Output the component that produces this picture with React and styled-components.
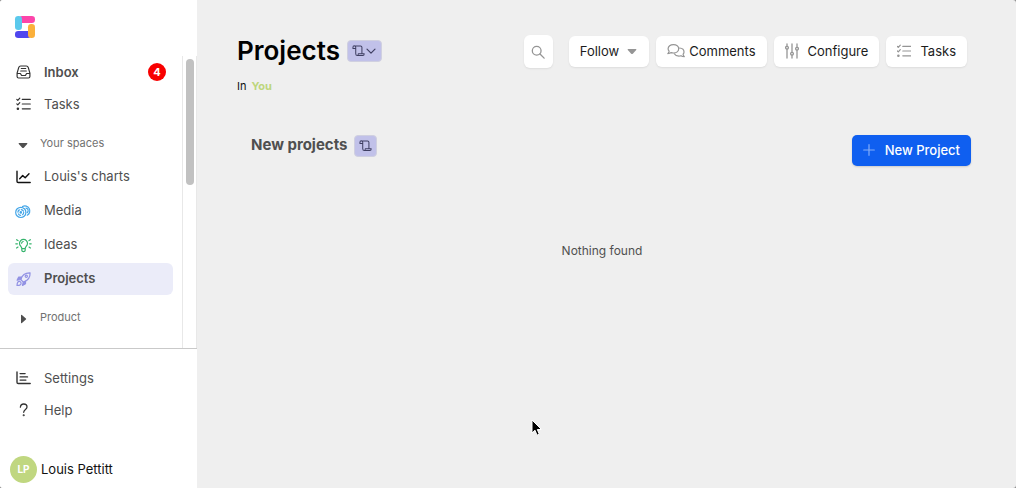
import React from 'react';
import styled, { createGlobalStyle } from 'styled-components';

const GlobalStyle = createGlobalStyle`
  * { box-sizing: border-box; }
  body { margin: 0; background: #8a8a8a; font-family: Inter, "Liberation Sans", sans-serif; font-size: 13px; color: #4f4f4f; }
  button { font: inherit; border: 0; cursor: pointer; }
  a { color: inherit; text-decoration: none; }
  h1, h2, p { margin: 0; }
  svg { display: block; flex: none; }
`;

// Layout
const Shell = styled.div`display: grid; grid-template-columns: 197px 1fr; height: 100vh; border-radius: 3px; overflow: hidden; background: #efefef;`;
const Sidebar = styled.aside`display: flex; flex-direction: column; min-height: 0; background: #fff;`;
const LogoLink = styled.a`display: block; padding: 15px 14px 17px;`;
const ScrollArea = styled.div`display: flex; flex: 1; min-height: 0;`;
const Nav = styled.nav`flex: 1; padding: 0 9px 0 8px; overflow: hidden;`;
const ScrollRail = styled.div`width: 15px; padding: 3px; border: 1px solid #e8e8e8; border-width: 0 1px;`;
const ScrollThumb = styled.div`width: 8px; height: 126px; border-radius: 4px; background: #c1c1c1;`;
const Footer = styled.div`padding: 13px 8px 5px; border-top: 1px solid #c9c9c9;`;

// Sidebar items
const NavItem = styled.a`
  display: flex; align-items: center; gap: 12px; height: 32px; padding: 0 7px; margin-bottom: ${(props) => props.$gap || 0}px;
  border-radius: 6px; color: #4f4f4f; font-weight: ${(props) => (props.$bold ? 600 : 400)};
  background: ${(props) => (props.$active ? '#ebecf9' : 'transparent')};
  svg { width: 17px; height: 16px; color: ${(props) => props.$color || '#333'}; }
`;
const NavLabel = styled.span`flex: 1; line-height: 16px; padding-bottom: ${(props) => props.$lift || 0}px;`;
const Count = styled.span`width: 18px; height: 18px; border-radius: 50%; background: #f80000; color: #fff; font-size: 11px; font-weight: 700; line-height: 18px; text-align: center;`;
const SpaceToggle = styled.button`
  display: flex; align-items: center; gap: 11px; width: 100%; height: 24px; padding: 0 9px; margin: ${(props) => props.$margin};
  background: none; color: #717171; font-size: 11px; text-align: left;
  svg { width: 12px; height: 12px; margin-top: 4px; color: #4f4f4f; }
`;
const User = styled.a`display: flex; align-items: center; gap: 4px; margin-top: 30px; padding: 0 2px; color: #111;`;
const Avatar = styled.span`width: 27px; height: 27px; border-radius: 50%; background: #c0d780; color: #fff; font-size: 10px; font-weight: 700; line-height: 27px; text-align: center;`;

// Main pane
const Main = styled.main`padding: 35px 45px 0 40px;`;
const Header = styled.header`display: flex; justify-content: space-between; align-items: flex-start; padding-right: 4px;`;
const TitleRow = styled.div`display: flex; align-items: center; gap: 7px; height: 32px;`;
const Title = styled.h1`color: #000; font-size: 26px; line-height: 32px; font-weight: 600;`;
const Chip = styled.button`
  display: flex; align-items: center; justify-content: center; height: 22px; width: ${(props) => props.$width}px; padding: 0;
  border: 1px solid #d0d0e0; border-radius: 4px; background: #c1c1e9; color: #3f3f62;
`;
const Crumb = styled.p`margin-top: 11px; font-size: 11px; line-height: 16px; color: #111;`;
const CrumbLink = styled.a`&& { margin-left: 5px; color: #bdd67c; font-weight: 700; }`;
const Actions = styled.div`display: flex; align-items: center; gap: 7px;`;
const ToolButton = styled.button`
  display: flex; align-items: center; gap: ${(props) => props.$gap || 9}px; height: 31px; padding: 0 11px 1px;
  border-radius: 6px; background: #fff; color: #1c1c1c; box-shadow: 0 1px 2px rgba(0, 0, 0, 0.08);
  svg { color: #959595; }
`;
const SearchButton = styled(ToolButton)`height: 33px; width: 29px; margin-right: 9px; padding: 0; justify-content: center;`;
const SectionHead = styled.div`display: flex; justify-content: space-between; align-items: flex-start; margin-top: 41px; padding-left: 14px;`;
const SectionTitle = styled.div`display: flex; align-items: center; gap: 7px;`;
const Subtitle = styled.h2`color: #4f4f4f; font-size: 15px; line-height: 20px; padding-bottom: 2px; font-weight: 700;`;
const NewButton = styled.button`
  display: flex; align-items: center; gap: 10px; height: 31px; padding: 0 11px 1px; border-radius: 5px;
  background: #0f5ff0; color: #fff; font-weight: 500; box-shadow: 0 1px 2px rgba(0, 0, 0, 0.15);
  svg { color: #84adf8; }
`;
const Empty = styled.p`margin-top: 77px; padding-right: 4px; text-align: center; font-size: 12px; line-height: 16px;`;
const Pointer = styled.svg`position: absolute; left: 531px; top: 419px; pointer-events: none;`;

const Icon = ({ children, w = 16, h = 16, box = '0 0 16 16', stroke = 1.2 }) => (
  <svg width={w} height={h} viewBox={box} fill="none" stroke="currentColor" strokeWidth={stroke} strokeLinecap="round" strokeLinejoin="round" aria-hidden="true">
    {children}
  </svg>
);

const InboxIcon = () => (
  <Icon>
    <path d="M1.6 9.2 3.2 3.6Q3.6 2 5.2 2h5.6q1.6 0 2 1.6l1.6 5.6v3.3q0 1.5-1.5 1.5H3.1q-1.5 0-1.5-1.5zM1.8 9.5h3.1l1.2 2h3.8l1.2-2h3.1" />
    <path d="M5.8 4.5h4.4M5.2 7h5.6" />
  </Icon>
);
const ChecklistIcon = (props) => (
  <Icon {...props}>
    <path d="m1.3 3.4 1 1 2-2.3M1.3 7.9l1 1 2-2.3M6.8 3.4h8M6.8 8h8M6.8 12.8h8" />
    <circle cx="2.4" cy="12.8" r=".7" fill="currentColor" />
  </Icon>
);
const ChartIcon = () => (
  <Icon stroke={1.4}>
    <path d="M1.5 2.2v10.1q0 1.2 1.2 1.2h12" />
    <path d="m4.2 9.8 3-3.2 2.5 2.2 3.8-4" />
  </Icon>
);
const MediaIcon = () => (
  <Icon w={17} box="0 0 17 16" stroke={1.2}>
    <circle cx="5.8" cy="9.4" r="5.1" />
    <circle cx="5.8" cy="9.4" r="2.9" strokeDasharray="2.6 2" />
    <circle cx="5.8" cy="9.4" r=".7" />
    <path d="M7.5 3.6a4.9 4.9 0 1 1 4.8 8.6M11 5.1a2.5 2.5 0 0 1 1.3 4.4" />
  </Icon>
);
const BulbIcon = () => (
  <Icon w={17} box="0 0 17 16">
    <path d="M6.8 11.6q0-1.3-1-2.3a4 4 0 1 1 5.4 0q-1 1-1 2.3zM6.8 11.6v1.7q0 1.3 1.7 1.3t1.7-1.3v-1.7M6.6 6.2q.1-1.4 1.6-1.7" />
    <path d="M.8 6.8h1.6M14.6 6.8h1.6M1.6 2.7l1.4.9M15.4 2.7l-1.4.9M1.6 11l1.4-.9M15.4 11l-1.4-.9" />
  </Icon>
);
const RocketIcon = () => (
  <Icon>
    <path d="M5.2 8.5c1.4-4.5 4.4-6.9 9.4-6.7.2 5-2.2 8-6.8 9.4z" />
    <path d="M6.1 6.1H3.2L1.6 9.2l3.6-.7zM10 10v2.8l-3 1.6.8-3.2z" fill="currentColor" />
    <circle cx="10.8" cy="5.3" r="1.1" />
    <path d="M4.4 10.4c-1.8-.5-2.8.9-2.9 4 3.2 0 4.6-1 4-2.8z" />
  </Icon>
);
const SettingsIcon = () => (
  <Icon stroke={1.4}>
    <path d="M1.5 2v10.3q0 1.2 1.2 1.2h12M4.6 3.6h5M4.6 6.9h7.4M4.6 10.1h5.8" />
  </Icon>
);
const HelpIcon = () => (
  <Icon stroke={1.3}>
    <path d="M4.9 5.2C5 3.1 6.3 2 8.2 2c2 0 3.3 1.2 3.3 2.9 0 2.6-3.3 2.5-3.3 5.4" />
    <circle cx="8.2" cy="13.3" r=".4" fill="currentColor" />
  </Icon>
);
const Caret = ({ right }) => (
  <svg width="12" height="12" viewBox="0 0 12 12" fill="currentColor" aria-hidden="true">
    {right ? <path d="M4 2.4q0-1.2.9-.4l4 3.4q.7.6 0 1.2l-4 3.4q-.9.8-.9-.4z" /> : <path d="M2.2 4q-1.1 0-.4.9l3.4 3.8q.8.8 1.6 0L10.2 4.9q.7-.9-.4-.9z" />}
  </svg>
);
const ScrollIcon = () => (
  <Icon w={13} h={12} box="0 0 14 13" stroke={1.1}>
    <path d="M4 3.7H1V2.4a1.5 1.5 0 0 1 3 0v7.1q0 2 1.7 2h6q1.5 0 1.5-2H6.8q0 2-1.1 2M2.5 1h6.7q1.5 0 1.5 1.5v7" />
  </Icon>
);
const ChatIcon = () => (
  <Icon w={18} h={16} box="0 0 18 16" stroke={1.2}>
    <path d="M6.4 1.6c3 0 5.3 1.8 5.3 4.2S9.4 10 6.4 10q-1.2 0-2.2-.4-1.3 1-3.4 1 1.2-1.1 1.3-2.4-1-1-1-2.4c0-2.4 2.3-4.2 5.3-4.2z" />
    <path d="M12.6 5c2.5.2 4.4 1.8 4.4 3.9q0 1.3-.9 2.3.1 1.4 1.2 2.5-2 0-3.3-1-1 .4-2.1.4c-2 0-3.8-.9-4.6-2.3" />
  </Icon>
);
const SlidersIcon = () => (
  <Icon w={14} h={16} box="0 0 14 16" stroke={1.3}>
    <path d="M2 1v2.2M2 6.2V15M7 1v8.2M7 12.2V15M12 1v3.2M12 7.2V15" />
    <circle cx="2" cy="4.7" r="1.4" />
    <circle cx="7" cy="10.7" r="1.4" />
    <circle cx="12" cy="5.7" r="1.4" />
  </Icon>
);

const Logo = () => (
  <svg width="21" height="24" viewBox="0 0 21 24" role="img" aria-label="Home">
    <rect x="5" y="1" width="16" height="7" rx="3.2" fill="#fc45aa" />
    <rect x="1" y="1" width="7" height="14" rx="3.2" fill="#5bc9ec" />
    <rect x="1" y="16" width="16" height="7" rx="3.2" fill="#4f46ee" />
    <rect x="14" y="9" width="7" height="14" rx="3.2" fill="#fbb03b" />
  </svg>
);

const spaces = [
  { label: "Louis's charts", icon: <ChartIcon />, color: '#111' },
  { label: 'Media', icon: <MediaIcon />, color: '#44a6e8' },
  { label: 'Ideas', icon: <BulbIcon />, color: '#35b36c' },
  { label: 'Projects', icon: <RocketIcon />, color: '#9292e4', active: true }
];

function App() {
  return (
    <Shell>
      <GlobalStyle />
      <Sidebar>
        <LogoLink href="#home"><Logo /></LogoLink>
        <ScrollArea>
          <Nav>
            <NavItem href="#inbox" $bold><InboxIcon /><NavLabel>Inbox</NavLabel><Count>4</Count></NavItem>
            <NavItem href="#tasks"><ChecklistIcon /><NavLabel>Tasks</NavLabel></NavItem>
            <SpaceToggle $margin="11px 0 6px" aria-expanded="true"><Caret />Your spaces</SpaceToggle>
            {spaces.map((space) => (
              <NavItem key={space.label} href="#space" $gap={2} $color={space.color} $active={space.active} $bold={space.active}>
                {space.icon}
                <NavLabel $lift={3}>{space.label}</NavLabel>
              </NavItem>
            ))}
            <SpaceToggle $margin="10px 0 0" aria-expanded="false"><Caret right />Product</SpaceToggle>
          </Nav>
          <ScrollRail><ScrollThumb /></ScrollRail>
        </ScrollArea>
        <Footer>
          <NavItem href="#settings"><SettingsIcon /><NavLabel $lift={1}>Settings</NavLabel></NavItem>
          <NavItem href="#help"><HelpIcon /><NavLabel $lift={1}>Help</NavLabel></NavItem>
          <User href="#profile"><Avatar>LP</Avatar><NavLabel $lift={2}>Louis Pettitt</NavLabel></User>
        </Footer>
      </Sidebar>

      <Main>
        <Header>
          <div>
            <TitleRow>
              <Title>Projects</Title>
              <Chip $width={35} aria-label="Change view">
                <ScrollIcon />
                <Icon w={12} h={12} box="0 0 12 12"><path d="m2 4.2 4 4 4-4" /></Icon>
              </Chip>
            </TitleRow>
            <Crumb>In<CrumbLink href="#you">You</CrumbLink></Crumb>
          </div>
          <Actions>
            <SearchButton aria-label="Search">
              <Icon w={14} h={14} stroke={1.5}><circle cx="6.5" cy="6.5" r="5" /><path d="m10.3 10.3 4.7 4.7" /></Icon>
            </SearchButton>
            <ToolButton $gap={7}>Follow<Caret /></ToolButton>
            <ToolButton $gap={4}><ChatIcon />Comments</ToolButton>
            <ToolButton><SlidersIcon />Configure</ToolButton>
            <ToolButton><ChecklistIcon w={14} h={16} box="1 0 14 16" />Tasks</ToolButton>
          </Actions>
        </Header>

        <SectionHead>
          <SectionTitle>
            <Subtitle>New projects</Subtitle>
            <Chip $width={23} aria-label="View"><ScrollIcon /></Chip>
          </SectionTitle>
          <NewButton>
            <Icon w={12} h={12} box="0 0 12 12"><path d="M6 .7v10.6M.7 6h10.6" /></Icon>
            New Project
          </NewButton>
        </SectionHead>
        <Empty>Nothing found</Empty>
      </Main>

      <Pointer width="12" height="18" viewBox="0 0 12 18" aria-hidden="true">
        <path d="M1 1v13l3-2.8 2 5 2.3-1-2-4.7h4.2z" fill="#000" stroke="#fff" strokeWidth="1" />
      </Pointer>
    </Shell>
  );
}

export default App;
